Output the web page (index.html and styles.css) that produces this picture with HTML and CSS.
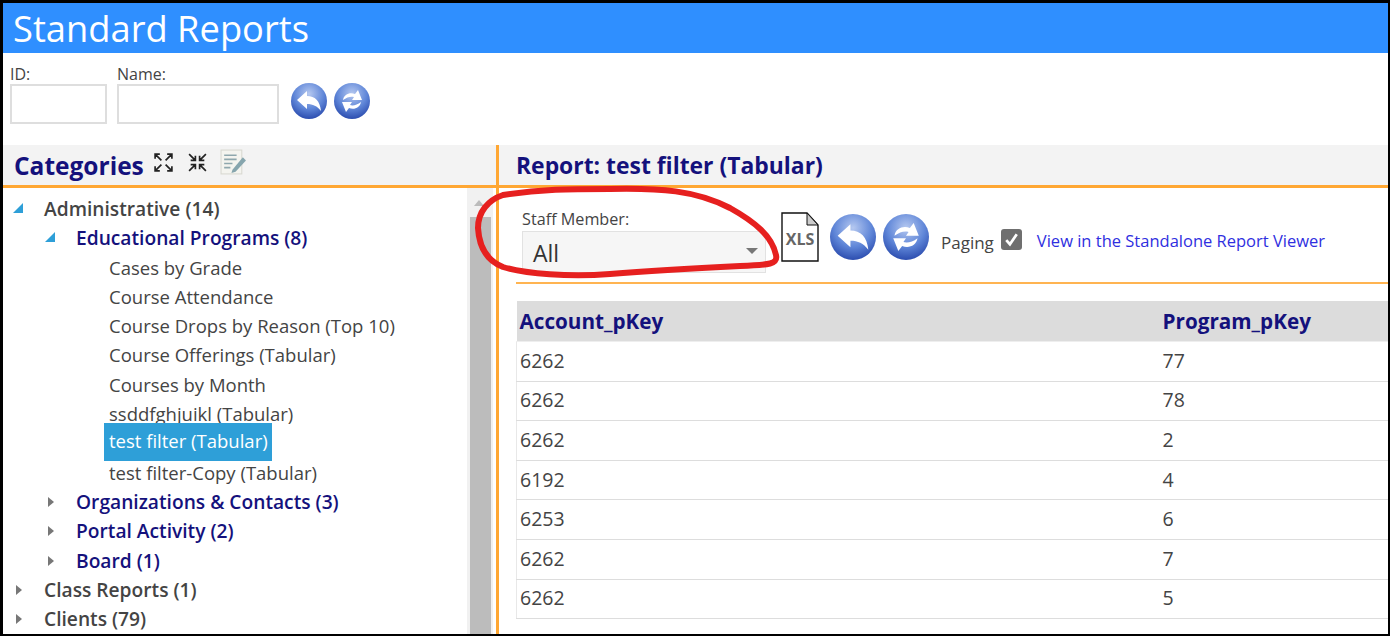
FILE: index.html
```html
<!DOCTYPE html>
<html>
<head>
    <title>Standard Reports</title>
    <link rel="stylesheet" href="styles.css">
</head>
<body>
    <svg class="defs" width="0" height="0">
        <defs>
            <radialGradient id="ball" cx="50%" cy="30%" r="75%">
                <stop offset="0" stop-color="#b5c8f0"/>
                <stop offset="0.55" stop-color="#5f86d8"/>
                <stop offset="1" stop-color="#2343a8"/>
            </radialGradient>
            <symbol id="btn-back" viewBox="0 0 36 36">
                <circle cx="18" cy="18" r="18" fill="url(#ball)"/>
                <path d="M6 17 L16 8 V13 C24 13 29 18 30 28 C26 23 22 21 16 21 V26 Z" fill="#fff"/>
            </symbol>
            <symbol id="btn-refresh" viewBox="0 0 36 36">
                <circle cx="18" cy="18" r="18" fill="url(#ball)"/>
                <path d="M9 17 C10 11 16 9 21 11 L24 7 L28 17 L18 17 L20 14 C17 13 13 14 9 17 Z" fill="#fff"/>
                <path d="M27 19 C26 25 20 27 15 25 L12 29 L8 19 L18 19 L16 22 C19 23 23 22 27 19 Z" fill="#fff"/>
            </symbol>
        </defs>
    </svg>

    <div class="page">
        <h1 class="banner">Standard Reports</h1>

        <div class="search">
            <div class="field">
                <label for="id">ID:</label>
                <input type="text" id="id" class="input-id">
            </div>
            <div class="field">
                <label for="name">Name:</label>
                <input type="text" id="name" class="input-name">
            </div>
            <svg class="btn-small btn-first"><use href="#btn-back"/></svg>
            <svg class="btn-small btn-second"><use href="#btn-refresh"/></svg>
        </div>

        <div class="split">
            <div class="left">
                <div class="pane-head cat-head">
                    <h2>Categories</h2>
                    <svg class="tool" viewBox="0 0 20 20" fill="none" stroke="#222" stroke-width="1.6">
                        <path d="M8 8 L2 2 M2 6.5 V2 H6.5 M12 8 L18 2 M13.5 2 H18 V6.5 M8 12 L2 18 M2 13.5 V18 H6.5 M12 12 L18 18 M18 13.5 V18 H13.5"/>
                    </svg>
                    <svg class="tool" viewBox="0 0 20 20" fill="none" stroke="#222" stroke-width="1.6">
                        <path d="M2 2 L8 8 M3.5 8 H8 V3.5 M18 2 L12 8 M12 3.5 V8 H16.5 M2 18 L8 12 M3.5 12 H8 V16.5 M18 18 L12 12 M12 16.5 V12 H16.5"/>
                    </svg>
                    <svg class="tool-edit" viewBox="0 0 26 26">
                        <rect x="1" y="1" width="20" height="23" fill="#f4f4ef" stroke="#d8d8d0"/>
                        <path d="M4 6 H16 M4 10 H16 M4 14 H12 M4 18 H10" stroke="#8fa7ad" stroke-width="1.6"/>
                        <path d="M12 20 L22 8 L25 11 L15 22 L11 23 Z" fill="#86a5ad"/>
                    </svg>
                </div>
                <div class="tree-wrap">
                    <ul class="tree">
                        <li class="node top"><span class="arrow open"></span>Administrative (14)</li>
                        <li class="node sub"><span class="arrow open"></span>Educational Programs (8)</li>
                        <li class="leaf">Cases by Grade</li>
                        <li class="leaf">Course Attendance</li>
                        <li class="leaf">Course Drops by Reason (Top 10)</li>
                        <li class="leaf">Course Offerings (Tabular)</li>
                        <li class="leaf">Courses by Month</li>
                        <li class="leaf">ssddfghjuikl (Tabular)</li>
                        <li class="leaf"><span class="selected">test filter (Tabular)</span></li>
                        <li class="leaf">test filter-Copy (Tabular)</li>
                        <li class="node sub"><span class="arrow"></span>Organizations &amp; Contacts (3)</li>
                        <li class="node sub"><span class="arrow"></span>Portal Activity (2)</li>
                        <li class="node sub"><span class="arrow"></span>Board (1)</li>
                        <li class="node top"><span class="arrow"></span>Class Reports (1)</li>
                        <li class="node top"><span class="arrow"></span>Clients (79)</li>
                    </ul>
                    <div class="scrollbar">
                        <div class="scroll-up"></div>
                        <div class="scroll-thumb"></div>
                    </div>
                </div>
            </div>

            <div class="right">
                <div class="pane-head report-head">
                    <h2>Report: test filter (Tabular)</h2>
                </div>
                <div class="report-body">
                    <div class="toolbar">
                        <div class="staff">
                            <label>Staff Member:</label>
                            <div class="select">All<span class="caret"></span></div>
                        </div>
                        <svg class="xls" viewBox="0 0 38 50">
                            <path d="M1 1 H26 L37 13 V49 H1 Z" fill="#fff" stroke="#111" stroke-width="1.4"/>
                            <path d="M26 1 V13 H37 Z" fill="#ccc" stroke="#111" stroke-width="1"/>
                            <text x="19" y="33" class="xls-text">XLS</text>
                        </svg>
                        <svg class="btn-big"><use href="#btn-back"/></svg>
                        <svg class="btn-big"><use href="#btn-refresh"/></svg>
                        <span class="paging">Paging</span>
                        <span class="check">
                            <svg viewBox="0 0 20 20" width="21" height="21" fill="none" stroke="#fff" stroke-width="2.6">
                                <path d="M5 10.5 L8.5 14.5 L15 5"/>
                            </svg>
                        </span>
                        <a class="viewer" href="#">View in the Standalone Report Viewer</a>
                    </div>

                    <table class="grid">
                        <thead>
                            <tr><th class="col-a">Account_pKey</th><th>Program_pKey</th></tr>
                        </thead>
                        <tbody>
                            <tr><td>6262</td><td>77</td></tr>
                            <tr><td>6262</td><td>78</td></tr>
                            <tr><td>6262</td><td>2</td></tr>
                            <tr><td>6192</td><td>4</td></tr>
                            <tr><td>6253</td><td>6</td></tr>
                            <tr><td>6262</td><td>7</td></tr>
                            <tr><td>6262</td><td>5</td></tr>
                        </tbody>
                    </table>
                </div>
            </div>
        </div>

        <!-- hand drawn circle round the filter -->
        <svg class="scribble" viewBox="470 182 320 100" fill="none">
            <path d="M503 195 C540 189 570 189 610 189 C660 188 695 190 730 208 C755 222 772 236 776 255 C778 264 770 265 740 266 C700 268 660 270 610 274 C570 277 525 274 503 267 C485 260 479 245 478 228 C478 212 488 200 503 195 Z" stroke="#e6201f" stroke-width="6"/>
        </svg>
    </div>
</body>
</html>
```

FILE: styles.css
```css
html, body {
    margin: 0;
    padding: 0;
    height: 100%;
    overflow: hidden;
}
body {
    font-family: "Open Sans", "Noto Sans", Arial, sans-serif;
    background: #fff;
    color: #444;
}
.defs {
    position: absolute;
}
.page {
    position: relative;
    box-sizing: border-box;
    width: 1390px;
    height: 636px;
    border: solid #000;
    border-width: 3px 2px 2px 3px;
    display: flex;
    flex-direction: column;
    overflow: hidden;
}
.banner {
    margin: 0;
    height: 50px;
    line-height: 50px;
    padding-left: 10px;
    flex-shrink: 0;
    background: #2f8fff;
    color: #fff;
    font-size: 36.3px;
    font-weight: 400;
}
.search {
    height: 92px;
    flex-shrink: 0;
    display: flex;
    gap: 10px;
    padding: 11px 0 0 7px;
    box-sizing: border-box;
}
.field {
    display: flex;
    flex-direction: column;
}
.field label {
    font-size: 16px;
    line-height: 20px;
    color: #444;
}
.field input {
    box-sizing: border-box;
    height: 40px;
    border: 2px solid #dedede;
    background: #fff;
}
.input-id { width: 97px; }
.input-name { width: 162px; }
.btn-small {
    width: 36px;
    height: 36px;
    margin-top: 19px;
    flex-shrink: 0;
}
.btn-first { margin-left: 2px; }
.btn-second { margin-left: -3px; }
.split {
    flex: 1;
    display: flex;
    min-height: 0;
}
.left {
    width: 493px;
    flex-shrink: 0;
    border-right: 3px solid #ffa733;
    display: flex;
    flex-direction: column;
}
.right {
    flex: 1;
    min-width: 0;
}
.pane-head {
    height: 43px;
    box-sizing: border-box;
    background: #f3f3f3;
    border-bottom: 3px solid #ffa733;
    display: flex;
    align-items: center;
}
.pane-head h2 {
    margin: 0;
    color: #14117c;
    font-weight: 700;
}
.cat-head {
    padding-left: 11px;
}
.cat-head h2 {
    font-size: 24.5px;
    margin-right: 9px;
}
.tool {
    width: 21px;
    height: 21px;
    margin-right: 13px;
    margin-top: -6px;
}
.tool-edit {
    width: 27px;
    height: 27px;
    margin-left: -1px;
    margin-top: -6px;
}
.report-head {
    padding-left: 17px;
}
.report-head h2 {
    font-size: 22.9px;
}
.tree-wrap {
    flex: 1;
    display: flex;
    min-height: 0;
    overflow: hidden;
}
.tree {
    flex: 1;
    list-style: none;
    margin: 0;
    padding: 6px 0 0 0;
}
.tree li {
    height: 29.3px;
    line-height: 29px;
    font-size: 18.5px;
    white-space: nowrap;
}
.arrow {
    position: absolute;
    width: 0;
    height: 0;
    margin-top: 10px;
    border-style: solid;
    border-width: 5px 0 5px 6px;
    border-color: transparent transparent transparent #777;
}
.arrow.open {
    margin-top: 9px;
    border-width: 0 0 10px 10px;
    border-color: transparent transparent #2e9fd8 transparent;
}
.tree .node {
    font-weight: 600;
    font-size: 19.2px;
}
.top {
    padding-left: 41px;
    color: #444;
}
.top .arrow { margin-left: -28px; }
.top .arrow.open { margin-left: -31px; }
.sub {
    padding-left: 73px;
    color: #14117c;
}
.sub .arrow { margin-left: -28px; }
.sub .arrow.open { margin-left: -31px; }
.leaf {
    padding-left: 106px;
}
.selected {
    display: inline-block;
    margin-left: -5px;
    padding: 0 4px 0 5px;
    height: 38px;
    line-height: 36px;
    margin-top: -5px;
    background: #2e9fd8;
    color: #fff;
    vertical-align: top;
}
.scrollbar {
    width: 26px;
    margin-right: 3px;
    background: #f1f1f1;
    flex-shrink: 0;
}
.scroll-up {
    height: 29px;
    position: relative;
}
.scroll-up::after {
    content: "";
    position: absolute;
    left: 7px;
    top: 12px;
    border-style: solid;
    border-width: 0 5px 6px 5px;
    border-color: transparent transparent #bbb transparent;
}
.scroll-thumb {
    margin-left: 3px;
    width: 21px;
    height: 420px;
    background: #bcbcbc;
}
.report-body {
    padding-left: 17px;
}
.toolbar {
    height: 96px;
    box-sizing: border-box;
    border-bottom: 2px solid #ffb451;
    display: flex;
    align-items: flex-start;
    position: relative;
    white-space: nowrap;
}
.staff {
    margin: 20px 0 0 6px;
    display: flex;
    flex-direction: column;
}
.staff label {
    font-size: 16.2px;
    line-height: 23px;
    color: #444;
}
.select {
    box-sizing: border-box;
    width: 244px;
    height: 42px;
    line-height: 42px;
    padding-left: 10px;
    background: #f6f6f6;
    border: 1px solid #e2e2e2;
    font-size: 23px;
    color: #333;
    position: relative;
}
.caret {
    position: absolute;
    right: 7px;
    top: 16px;
    border-style: solid;
    border-width: 6px 6px 0 6px;
    border-color: #777 transparent transparent transparent;
}
.xls {
    width: 38px;
    height: 50px;
    margin: 24px 0 0 15px;
}
.xls-text {
    font-size: 16px;
    font-weight: 700;
    fill: #666;
    text-anchor: middle;
}
.btn-big {
    width: 46px;
    height: 46px;
    margin: 26px 0 0 11px;
}
.btn-big + .btn-big {
    margin-left: 7px;
}
.paging {
    font-size: 17px;
    margin: 43px 0 0 12px;
}
.check {
    width: 21px;
    height: 21px;
    margin: 41px 0 0 7px;
    background: #6f6f6f;
    border-radius: 3px;
}
.check svg {
    display: block;
}
.viewer {
    font-size: 16.5px;
    margin: 41px 0 0 15px;
    color: #2f2fe0;
    text-decoration: none;
}
.grid {
    border-collapse: collapse;
    width: 900px;
    margin-top: 17px;
    table-layout: fixed;
}
.grid th {
    background: #dcdcdc;
    color: #14117c;
    text-align: left;
    font-size: 20.7px;
    font-weight: 700;
    height: 40px;
    padding: 0 3px;
    border-bottom: 1px solid #eee;
}
.col-a {
    width: 637px;
}
.grid td {
    height: 39.6px;
    padding: 0 3px 2px;
    box-sizing: border-box;
    font-size: 19.5px;
    color: #444;
    border-bottom: 1px solid #ddd;
}
.grid td:first-child {
    border-left: 1px solid #e8e8e8;
}
.scribble {
    position: absolute;
    left: 467px;
    top: 179px;
    width: 320px;
    height: 100px;
}
```
